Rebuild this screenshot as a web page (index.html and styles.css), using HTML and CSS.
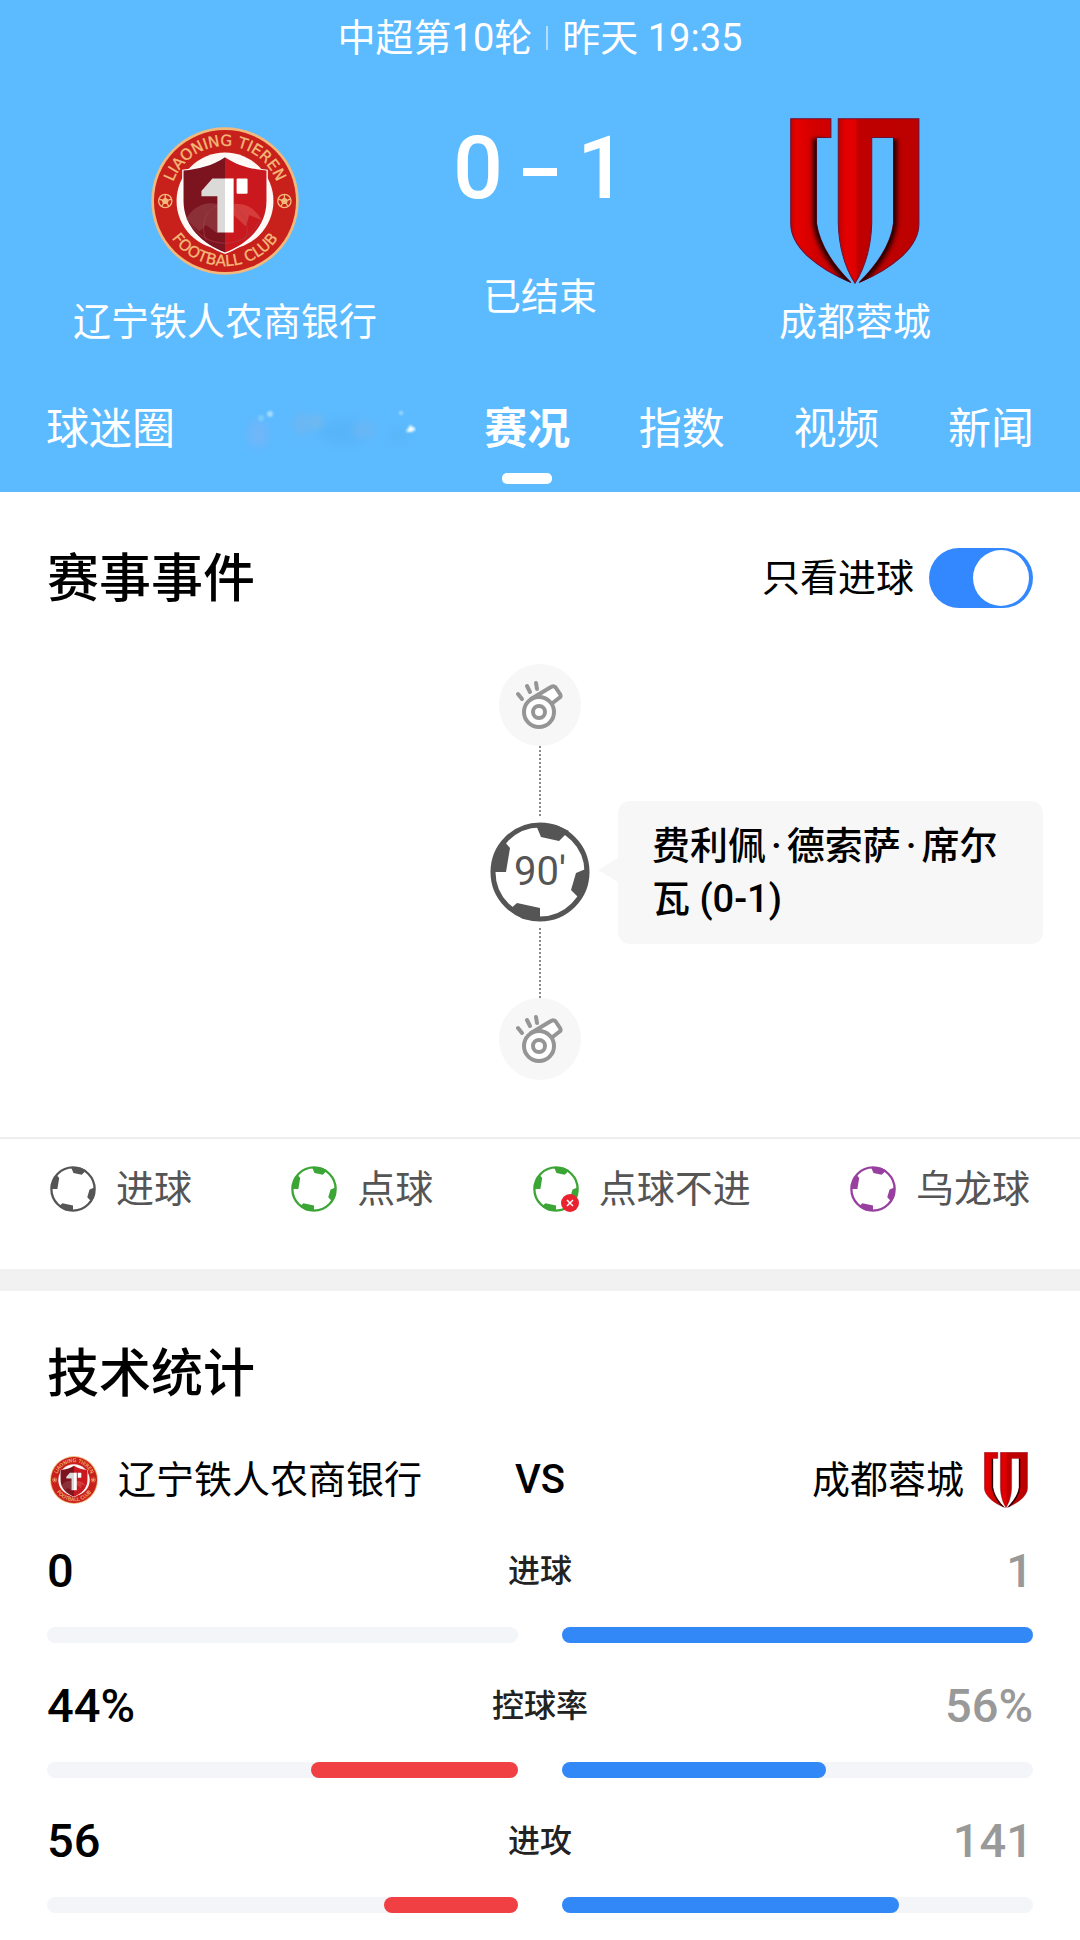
FILE: index.html
```html
<!DOCTYPE html>
<html lang="zh-CN">
<head>
    <meta charset="UTF-8">
    <meta name="viewport" content="width=device-width, initial-scale=1.0">
    <title>辽宁铁人农商银行 0-1 成都蓉城</title>
    <link rel="stylesheet" href="styles.css">
</head>
<body>
    <!-- Iconos compartidos -->
    <svg class="sprite" aria-hidden="true">
        <defs>
            <linearGradient id="cdLeft" gradientUnits="userSpaceOnUse" x1="38" y1="0" x2="118" y2="0">
                <stop offset="0" stop-color="#c40000"/>
                <stop offset="0.2" stop-color="#e60000"/>
                <stop offset="1" stop-color="#d00000"/>
            </linearGradient>
            <linearGradient id="cdMid" gradientUnits="userSpaceOnUse" x1="180" y1="0" x2="421" y2="0">
                <stop offset="0" stop-color="#c40000"/>
                <stop offset="0.1" stop-color="#e40000"/>
                <stop offset="0.21" stop-color="#e00000"/>
                <stop offset="0.25" stop-color="#c00000"/>
                <stop offset="1" stop-color="#bc0000"/>
            </linearGradient>
            <filter id="cdSoft" x="-50%" y="-50%" width="200%" height="200%">
                <feGaussianBlur stdDeviation="7"/>
            </filter>
            <clipPath id="cdLeftClip">
                <path d="M38 38 H158 V94 H115 V350 C125 420 172 482 218 528 C120 486 38 424 38 352Z"/>
            </clipPath>
            <clipPath id="cdRightClip">
                <path d="M345 94 H421 V352 C421 424 340 486 242 528 C288 482 337 420 345 350Z"/>
            </clipPath>
            <path id="arcTop" d="M257 424 A166 166 0 0 1 257 92 A166 166 0 0 1 257 424"/>
            <path id="arcBottom" d="M257 62 A196 196 0 0 0 257 454 A196 196 0 0 0 257 62"/>
        </defs>

        <symbol id="chengdu" viewBox="36 36 388 496">
            <g stroke="#6e1030" stroke-width="3">
                <path d="M38 38 H158 V94 H115 V350 C125 420 172 482 218 528 C120 486 38 424 38 352Z" fill="url(#cdLeft)"/>
                <path d="M180 38 H421 V352 C421 424 340 486 242 528 C288 482 337 420 345 350 V94 H280 V350 C278 430 254 492 230 530 C206 492 182 430 180 350Z" fill="url(#cdMid)"/>
            </g>
            <g fill="none" stroke="#240004" stroke-width="30">
                <g clip-path="url(#cdLeftClip)">
                    <path d="M119 98 V350 C129 420 176 482 222 528" filter="url(#cdSoft)"/>
                </g>
                <g clip-path="url(#cdRightClip)">
                    <path d="M341 98 V350 C333 420 284 482 238 528" filter="url(#cdSoft)"/>
                </g>
            </g>
        </symbol>

        <symbol id="ball" viewBox="0 0 100 100">
            <circle cx="50" cy="50" r="47" fill="none" stroke="currentColor" stroke-width="5"/>
            <path d="M46 3 L51 15 L69 19 L79 9 L66 3ZM14 19 L20 26 L16 50 L3 50 L3 38ZM98 46 L86 51 L81 68 L90 77 L97 64ZM50 98 L50 86 L27 81 L19 88 L33 97Z" fill="currentColor"/>
        </symbol>

        <symbol id="whistle" viewBox="0 0 82 82">
            <g fill="#fff" stroke="#959595" stroke-width="4" stroke-linecap="round" stroke-linejoin="round">
                <path d="M32 35 L52 23 C54 22 56 22 57 24 L61 30 C62 32 62 33 60 34 L51 41"/>
                <circle cx="40" cy="48" r="15"/>
                <circle cx="40" cy="48" r="6"/>
                <path d="M19 30 L23 35M28 22 L31 28M37 19 L38 25" fill="none"/>
            </g>
        </symbol>
    </svg>

    <header class="match">
        <div class="match-info">
            <span>中超第10轮</span>
            <i class="bar"></i>
            <span>昨天 19:35</span>
        </div>

        <div class="scoreboard">
            <div class="team">
                <div class="team-logo">
                    <svg class="logo-liaoning" viewBox="34 35 446 446" role="img" aria-label="辽宁铁人">
                        <g id="liaoning">
                            <circle cx="257" cy="258" r="222" fill="#f3b97a"/>
                            <circle cx="257" cy="258" r="214" fill="#c8201b"/>
                            <circle cx="257" cy="258" r="146" fill="#fff8f4"/>
                            <path d="M257 122 C295 148 340 160 386 164 V258 C386 340 325 392 257 418 C189 392 128 340 128 258 V164 C174 160 219 148 257 122Z" fill="#fff"/>
                            <path d="M257 126 C219 152 176 162 132 166 V258 C132 336 190 387 257 413Z" fill="#7c1420"/>
                            <path d="M257 126 C295 152 338 162 382 166 V258 C382 336 324 387 257 413Z" fill="#c9191f"/>
                            <path d="M140 314 C160 270 205 258 234 268 L234 355 L200 330 L180 350Z" fill="#a45a5c" opacity="0.4"/>
                            <path d="M283 268 C325 262 350 285 368 316 L330 300 L320 335 L283 300Z" fill="#e2605a" opacity="0.5"/>
                            <path d="M155 330 C190 375 225 385 257 385 C300 385 335 365 360 320 M200 375 C185 340 190 290 234 272 M316 375 C335 340 320 300 283 272" fill="none" stroke="#a4434a" stroke-width="3" opacity="0.6"/>
                            <path d="M219 190 H257 V353 H234 V244 H186 V228Z" fill="#dcdad8"/>
                            <path d="M257 190 H283 V353 H257Z" fill="#fff"/>
                            <rect x="292" y="190" width="33" height="46" rx="3" fill="#fff"/>
                            <g fill="none" stroke="#f3b97a" stroke-width="4">
                                <circle cx="77" cy="258" r="20"/>
                                <circle cx="436" cy="258" r="20"/>
                                <path d="M77 238v10M58 252l9 3M96 252l-9 3M66 274l5-7M88 274l-5-7M436 238v10M417 252l9 3M455 252l-9 3M425 274l5-7M447 274l-5-7"/>
                            </g>
                            <path d="M77 247l11 8-4 12H70l-4-12zM436 247l11 8-4 12h-14l-4-12z" fill="#f3b97a"/>
                            <text class="crest-text"><textPath href="#arcTop" startOffset="50%">LIAONING TIEREN</textPath></text>
                            <text class="crest-text"><textPath href="#arcBottom" startOffset="50%">FOOTBALL CLUB</textPath></text>
                        </g>
                    </svg>
                </div>
                <span>辽宁铁人农商银行</span>
            </div>
            <div class="result">
                <div class="score"><span>0</span><i class="dash"></i><span>1</span></div>
                <span>已结束</span>
            </div>
            <div class="team">
                <div class="team-logo"><svg class="logo-chengdu" role="img" aria-label="成都蓉城"><use href="#chengdu"/></svg></div>
                <span>成都蓉城</span>
            </div>
        </div>

        <nav class="tabs">
            <a href="#">球迷圈</a>
            <a href="#" class="tab-smudge">
                <svg viewBox="0 0 172 50" aria-hidden="true">
                    <g class="haze">
                        <ellipse cx="14" cy="30" rx="10" ry="14" fill="#7db4f5"/>
                        <ellipse cx="58" cy="20" rx="8" ry="12" fill="#78b4e8"/>
                        <ellipse cx="73" cy="18" rx="5" ry="7" fill="#90b8d8"/>
                        <ellipse cx="100" cy="28" rx="26" ry="13" fill="#55b1f6"/>
                        <ellipse cx="120" cy="26" rx="12" ry="9" fill="#72b4ee"/>
                        <ellipse cx="155" cy="32" rx="10" ry="8" fill="#58b4f2"/>
                    </g>
                    <g class="spots">
                        <circle cx="26" cy="10" r="3" fill="#a4dcff"/>
                        <circle cx="17" cy="14" r="3" fill="#7acdfb"/>
                        <circle cx="157" cy="9" r="2" fill="#a4dcff"/>
                        <path d="M162 28 L166 21 L172 25 L168 28Z" fill="#f0fcff"/>
                    </g>
                </svg>
            </a>
            <a href="#" class="active">赛况</a>
            <a href="#">指数</a>
            <a href="#">视频</a>
            <a href="#">新闻</a>
        </nav>
    </header>

    <section class="events">
        <div class="section-head">
            <h2>赛事事件</h2>
            <label class="only-goals" for="onlyGoals">只看进球
                <input type="checkbox" id="onlyGoals" class="switch" checked>
            </label>
        </div>

        <div class="timeline">
            <svg class="whistle" role="img" aria-label="完场"><use href="#whistle"/></svg>
            <div class="event">
                <div class="node">
                    <i class="line"></i>
                    <div class="minute">
                        <svg class="minute-ball" aria-hidden="true"><use href="#ball"/></svg>
                        <span>90'</span>
                    </div>
                    <i class="line"></i>
                </div>
                <p class="bubble">费利佩<span class="dot">·</span>德索萨<span class="dot">·</span>席尔瓦 (0-1)</p>
            </div>
            <svg class="whistle" role="img" aria-label="开场"><use href="#whistle"/></svg>
        </div>

        <ul class="legend">
            <li><svg class="ball goal" aria-hidden="true"><use href="#ball"/></svg>进球</li>
            <li><svg class="ball penalty" aria-hidden="true"><use href="#ball"/></svg>点球</li>
            <li>
                <svg class="ball penalty" viewBox="0 0 46 46" aria-hidden="true">
                    <use href="#ball" width="46" height="46"/>
                    <circle cx="37" cy="37" r="9" fill="#e8222e"/>
                    <path d="M34 34 L40 40 M40 34 L34 40" stroke="#fff" stroke-width="1.5"/>
                </svg>点球不进
            </li>
            <li><svg class="ball own-goal" aria-hidden="true"><use href="#ball"/></svg>乌龙球</li>
        </ul>
    </section>

    <section class="stats">
        <h2>技术统计</h2>
        <div class="versus">
            <div class="side">
                <svg class="mini-liaoning" viewBox="34 35 446 446" aria-hidden="true"><use href="#liaoning"/></svg>
                <span>辽宁铁人农商银行</span>
            </div>
            <span class="vs">VS</span>
            <div class="side right">
                <span>成都蓉城</span>
                <svg class="mini-chengdu" aria-hidden="true"><use href="#chengdu"/></svg>
            </div>
        </div>

        <div class="stat">
            <div class="values"><b>0</b><span>进球</span><b class="away">1</b></div>
            <div class="bars">
                <div class="track home"></div>
                <div class="track"><div class="fill" style="width: 100%"></div></div>
            </div>
        </div>
        <div class="stat">
            <div class="values"><b>44%</b><span>控球率</span><b class="away">56%</b></div>
            <div class="bars">
                <div class="track home"><div class="fill" style="width: 44%"></div></div>
                <div class="track"><div class="fill" style="width: 56%"></div></div>
            </div>
        </div>
        <div class="stat">
            <div class="values"><b>56</b><span>进攻</span><b class="away">141</b></div>
            <div class="bars">
                <div class="track home"><div class="fill" style="width: 28.4%"></div></div>
                <div class="track"><div class="fill" style="width: 71.6%"></div></div>
            </div>
        </div>
    </section>
</body>
</html>
```
FILE: styles.css
```css
* {
    box-sizing: border-box;
}
body {
    margin: 0;
    background: #fff;
    color: #000;
    font-family: Roboto, "Noto Sans CJK SC", sans-serif;
    font-size: 38px;
    line-height: 48px;
}
h2 {
    margin: 0;
    padding-top: 4px;
    font-size: 52px;
    line-height: 64px;
    font-weight: 500;
}
svg {
    display: block;
    flex-shrink: 0;
}
.sprite {
    position: absolute;
    width: 0;
    height: 0;
}
.crest-text {
    font-family: "DejaVu Sans", sans-serif;
    font-size: 46px;
    fill: #f3b97a;
    stroke: #f3b97a;
    stroke-width: 1px;
    text-anchor: middle;
}

/* Cabecera */
.match {
    background: #5cbaff;
    color: #fff;
    padding-top: 14px;
}
.match-info {
    display: flex;
    justify-content: center;
    align-items: center;
    gap: 14px;
}
.bar {
    width: 2px;
    height: 24px;
    background: #b4deff;
}
.scoreboard {
    display: grid;
    grid-template-columns: 5fr 2fr 5fr;
    margin-top: 56px;
}
.team {
    display: flex;
    flex-direction: column;
    align-items: center;
    gap: 14px;
}
.team-logo {
    display: flex;
    align-items: center;
    height: 166px;
}
.logo-liaoning {
    width: 148px;
    height: 148px;
}
.logo-chengdu {
    width: 130px;
    height: 166px;
}
.result {
    display: flex;
    flex-direction: column;
    align-items: center;
    gap: 55px;
}
.score {
    display: flex;
    align-items: center;
    gap: 20px;
    font-size: 88px;
    line-height: 100px;
    font-weight: 500;
}
.dash {
    width: 34px;
    height: 8px;
    margin-top: 8px;
    background: #fff;
}
.tabs {
    display: flex;
    justify-content: space-between;
    margin-top: 53px;
    padding: 0 46px 8px;
}
.tabs a {
    display: flex;
    flex-direction: column;
    align-items: center;
    gap: 14px;
    color: #fff;
    font-size: 43px;
    line-height: 60px;
    text-decoration: none;
}
.tabs a::after {
    content: "";
    width: 50px;
    height: 11px;
    border-radius: 5px;
}
.tabs .active {
    font-weight: 700;
}
.tabs .active::after {
    background: #fff;
}
.tab-smudge svg {
    width: 172px;
    height: 60px;
}
.haze {
    filter: blur(4px);
    opacity: 0.6;
}
.spots {
    filter: blur(1px);
}

/* Eventos */
.events {
    padding-top: 52px;
    border-bottom: 22px solid #f1f1f1;
}
.section-head {
    display: flex;
    justify-content: space-between;
    align-items: center;
    padding: 0 47px;
}
.only-goals {
    display: flex;
    align-items: center;
    gap: 15px;
}
.switch {
    appearance: none;
    display: flex;
    align-items: center;
    width: 104px;
    height: 60px;
    margin: 0;
    padding: 2px 4px;
    border-radius: 30px;
    background: #ccc;
}
.switch::before {
    content: "";
    width: 56px;
    height: 56px;
    border-radius: 50%;
    background: #fff;
}
.switch:checked {
    background: #3388ff;
    justify-content: flex-end;
}
.timeline {
    display: flex;
    flex-direction: column;
    align-items: center;
    margin: 52px 0 57px;
}
.whistle {
    width: 82px;
    height: 82px;
    border-radius: 50%;
    background: #f7f7f7;
}
.event {
    display: grid;
    grid-template-columns: 1fr 100px 1fr;
    align-items: center;
    width: 100%;
}
.node {
    grid-column: 2;
    display: flex;
    flex-direction: column;
    align-items: center;
    gap: 6px;
}
.line {
    height: 70px;
    border-left: 2px dotted #8a8a8a;
}
.minute {
    display: grid;
    place-items: center;
    color: #555;
    font-size: 40px;
}
.minute > * {
    grid-area: 1 / 1;
}
.minute-ball {
    width: 100px;
    height: 100px;
}
.bubble {
    position: relative;
    margin: 0 37px 0 28px;
    padding: 19px 34px 18px;
    border-radius: 12px;
    background: #f7f7f7;
    line-height: 53px;
    font-weight: 500;
}
.bubble::before {
    content: "";
    position: absolute;
    left: -20px;
    top: 50%;
    margin-top: -14px;
    border: 12px solid transparent;
    border-left-width: 0;
    border-right: 20px solid #f7f7f7;
}
.dot {
    margin: 0 5px;
}
.legend {
    display: flex;
    justify-content: space-between;
    margin: 0;
    padding: 26px 50px 56px;
    border-top: 2px solid #eee;
    list-style: none;
    color: #555;
}
.legend li {
    display: flex;
    align-items: center;
    gap: 20px;
}
.ball {
    width: 46px;
    height: 46px;
}
.goal {
    color: #555;
}
.penalty {
    color: #3ba535;
}
.own-goal {
    color: #983f9f;
}

/* Estadísticas */
.stats {
    padding: 48px 47px 29px;
}
.versus {
    display: grid;
    grid-template-columns: 1fr auto 1fr;
    align-items: center;
    height: 56px;
    margin-top: 45px;
}
.side {
    display: flex;
    align-items: center;
    gap: 20px;
    padding: 0 5px 0 3px;
}
.side.right {
    justify-content: flex-end;
}
.mini-liaoning {
    width: 48px;
    height: 48px;
}
.mini-chengdu {
    width: 44px;
    height: 56px;
}
.vs {
    font-size: 40px;
    font-weight: 500;
}
.stat {
    margin-top: 35px;
}
.values {
    display: grid;
    grid-template-columns: 1fr auto 1fr;
    align-items: center;
    color: #222;
    font-size: 32px;
    line-height: 56px;
    font-weight: 500;
}
.values b {
    color: #000;
    font-size: 47px;
    font-weight: 500;
}
.values .away {
    color: #999;
    text-align: right;
}
.bars {
    display: grid;
    grid-template-columns: 1fr 1fr;
    gap: 44px;
    margin-top: 28px;
}
.track {
    display: flex;
    height: 16px;
    border-radius: 8px;
    background: #f4f5f9;
}
.track.home {
    justify-content: flex-end;
}
.fill {
    border-radius: 8px;
    background: #3388f8;
}
.home .fill {
    background: #f04044;
}
```
